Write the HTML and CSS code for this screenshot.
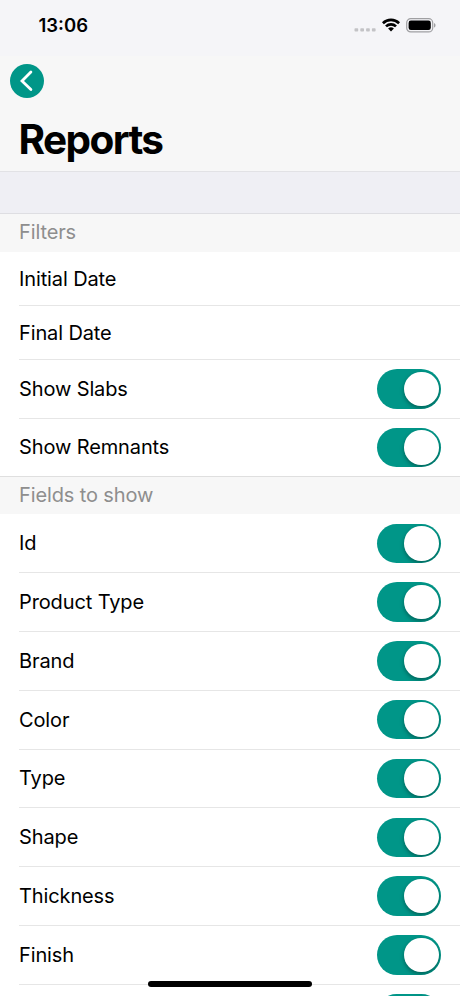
FILE: index.html
```html
<!DOCTYPE html>
<html lang="en">
<head>
    <title>Reports</title>
    <meta charset="utf-8">
    <link rel="stylesheet" href="styles.css">
</head>

<body>
    <div class="phone">
        <div class="header">
            <div class="status">
                <span class="time">13:06</span>
                <div class="status-icons">
                    <svg class="signal" width="22" height="4" viewBox="0 0 22 4">
                        <g fill="#c3c3c6">
                            <rect x="0.5" y="0.3" width="3.7" height="3.2" rx="0.8"/>
                            <rect x="6.3" y="0.3" width="3.7" height="3.2" rx="0.8"/>
                            <rect x="12.1" y="0.3" width="3.7" height="3.2" rx="0.8"/>
                            <rect x="17.9" y="0.3" width="3.7" height="3.2" rx="0.8"/>
                        </g>
                    </svg>
                    <svg class="wifi" width="18" height="14" viewBox="0 0 18 14">
                        <g fill="none" stroke="#000" stroke-width="2.7">
                            <path d="M0.9 5.2 A11.6 11.6 0 0 1 17.1 5.2"/>
                            <path d="M4 8.4 A7.2 7.2 0 0 1 14 8.4"/>
                        </g>
                        <path d="M9 13.5 L6.1 10.6 A4.1 4.1 0 0 1 11.9 10.6 Z" fill="#000"/>
                    </svg>
                    <svg class="battery" width="30" height="15" viewBox="0 0 30 15">
                        <rect x="0.7" y="0.7" width="26" height="13.2" rx="4" fill="none" stroke="#a0a0a3" stroke-width="1.2"/>
                        <rect x="2.6" y="2.6" width="22.2" height="9.4" rx="2.3" fill="#000"/>
                        <path d="M28 5 C30 5.8 30 8.8 28 9.6 Z" fill="#a0a0a3"/>
                    </svg>
                </div>
            </div>
            <div class="back">
                <svg width="34" height="34" viewBox="0 0 34 34">
                    <path d="M20.9 8 L12 17 L20.9 25.6" fill="none" stroke="#fff" stroke-width="2.8" stroke-linecap="round" stroke-linejoin="miter"/>
                </svg>
            </div>
            <h1 class="title">Reports</h1>
        </div>
        <div class="spacer"></div>

        <h2 class="section">Filters</h2>
        <div class="list">
            <div class="row date"><span>Initial Date</span></div>
            <div class="row date"><span>Final Date</span></div>
            <div class="row"><span>Show Slabs</span><i class="switch"></i></div>
            <div class="row"><span>Show Remnants</span><i class="switch"></i></div>
        </div>

        <h2 class="section fields">Fields to show</h2>
        <div class="list">
            <div class="row"><span>Id</span><i class="switch"></i></div>
            <div class="row"><span>Product Type</span><i class="switch"></i></div>
            <div class="row"><span>Brand</span><i class="switch"></i></div>
            <div class="row"><span>Color</span><i class="switch"></i></div>
            <div class="row"><span>Type</span><i class="switch"></i></div>
            <div class="row"><span>Shape</span><i class="switch"></i></div>
            <div class="row"><span>Thickness</span><i class="switch"></i></div>
            <div class="row"><span>Finish</span><i class="switch"></i></div>
            <div class="row"><i class="switch"></i></div>
        </div>
        <div class="home-bar"></div>
    </div>
</body>
</html>
```
FILE: styles.css
```css
* {
    box-sizing: border-box;
}

body {
    margin: 0;
    font-family: Inter, "Liberation Sans", sans-serif;
    color: #000;
    background-color: #fff;
}

.phone {
    position: relative;
    width: 460px;
    height: 996px;
    overflow: hidden;
}

.header {
    height: 171px;
    background: linear-gradient(#f5f5f8 56px, #f7f7f7 56px);
}

.status {
    display: flex;
    justify-content: space-between;
    height: 63.5px;
    padding: 14px 24px 0 38.5px;
}

.time {
    font-size: 18.5px;
    font-weight: 600;
    line-height: 22px;
}

.status-icons {
    display: flex;
    align-items: flex-start;
}

.signal {
    margin: 14px 6px 0 0;
}

.wifi {
    margin: 3.5px 6px 0 0;
}

.battery {
    margin-top: 3.5px;
}

.back {
    width: 34px;
    height: 34px;
    margin-left: 10.3px;
    border-radius: 50%;
    background-color: #009688;
}

.back svg {
    display: block;
}

.title {
    margin: 17.5px 0 0 18.5px;
    font-size: 40.5px;
    font-weight: 700;
    line-height: 50px;
    letter-spacing: -1.6px;
}

.spacer {
    height: 43px;
    background-color: #efeff4;
    border-top: 1px solid #e2e2e5;
    border-bottom: 1px solid #dedee2;
}

.section {
    height: 38px;
    margin: 0;
    padding-left: 19px;
    font-size: 20px;
    font-weight: 400;
    line-height: 37px;
    letter-spacing: -0.12px;
    color: #8e8e8e;
    background-color: #f7f7f7;
}

.fields {
    height: 38.3px;
    line-height: 36px;
    border-top: 1px solid #dfdfdf;
}

.row {
    display: flex;
    align-items: center;
    justify-content: space-between;
    height: 58.8px;
    margin-left: 19px;
    padding-right: 19px;
    font-size: 20px;
    letter-spacing: -0.12px;
    border-bottom: 1px solid #e6e6e6;
}

.date {
    height: 54px;
}

/* the section border closes the list */
.row:last-child {
    height: 57.3px;
    border-bottom: none;
}

.switch {
    width: 64px;
    height: 39.5px;
    margin-left: auto;
    padding: 2.5px;
    border-radius: 20px;
    background-color: #009688;
    overflow: hidden;
}

.switch::after {
    content: "";
    display: block;
    width: 34.5px;
    height: 34.5px;
    margin-left: auto;
    border-radius: 50%;
    background-color: #fff;
    box-shadow: 0 2px 4px rgba(0, 0, 0, 0.35);
}

.home-bar {
    position: absolute;
    left: 148px;
    bottom: 9px;
    width: 164px;
    height: 6px;
    border-radius: 3px;
    background-color: #000;
}
```
